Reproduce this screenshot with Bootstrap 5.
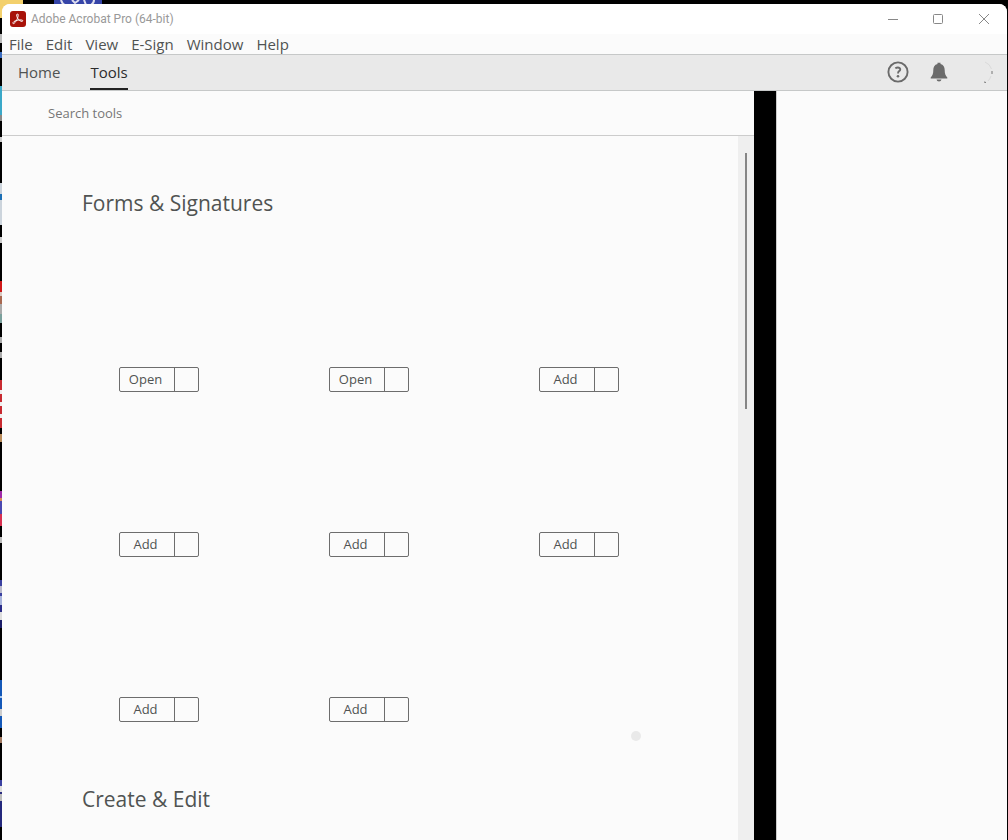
<!DOCTYPE html>
<html lang="en">
<head>
<meta charset="utf-8">
<meta name="viewport" content="width=device-width, initial-scale=1">
<title>Adobe Acrobat Pro (64-bit)</title>
<link href="https://cdn.jsdelivr.net/npm/bootstrap@5.3.0/dist/css/bootstrap.min.css" rel="stylesheet">
<style>
  body { font-family: "Open Sans", "Noto Sans", sans-serif; font-size: 15px; line-height: 20px; color: #505352; background: #000; }
  button { font: inherit; color: inherit; }
  a { color: inherit; text-decoration: none; }
  .desktop { padding: 4px 1px 0 2px; }
  .desk-left { width: 2px; height: 840px; background: linear-gradient(#f3d06c 18px, #000 18px 34px, #bbb 34px 43px, #000 43px 52px, #3a6cc0 52px 58px, #000 58px 86px, #3aa8c8 86px 115px, #888 115px 121px, #000 121px 137px, #ccc 137px 142px, #000 142px 183px, #ccd4dc 183px 194px, #1c6fb5 194px 200px, #ccd4dc 200px 225px, #000 225px 237px, #ccc 237px 243px, #000 243px 281px, #d01818 281px 292px, #d8c8c0 292px 296px, #a86850 296px 304px, #aaa 304px 314px, #7aa09c 314px 323px, #000 323px 337px, #aaa 337px 343px, #000 343px 352px, #aaa 352px 358px, #000 358px 380px, #c82a30 380px 390px, #eee 390px 394px, #c82a30 394px 402px, #eee 402px 406px, #c82a30 406px 414px, #eee 414px 418px, #c82a30 418px 428px, #000 428px 434px, #b98b5a 434px 442px, #000 442px 491px, #a02aa8 491px 498px, #d88858 498px 501px, #4a48b0 501px 514px, #d83050 514px 526px, #000 526px 537px, #bbb 537px 543px, #000 543px 580px, #3a40a0 580px 586px, #b8b8cc 586px 593px, #3a40a0 593px 596px, #a8b4dc 596px 605px, #2a2c88 605px 612px, #ddd 612px 620px, #1a1c68 620px 628px, #000 628px 680px, #1458b8 680px 696px, #a8c8f0 696px 698px, #1458b8 698px 709px, #ccc 709px 716px, #1458b8 716px 728px, #000 728px 737px, #a07860 737px 743px, #000 743px 780px, #3a40a0 780px 786px, #ddd 786px 792px, #2a2c80 792px 794px, #bbb 794px 801px, #24287c 801px 827px, #000 827px); }
  .desk-folder { width: 21px; height: 16px; background: #f3d06c; }
  .desk-gap { width: 31px; }
  .app { background: #fbfbfb; border-radius: 8px 8px 0 0; }
  .titlebar { height: 30px; background: #fff; padding-left: 8px; gap: 5px; font-family: Roboto, "Open Sans", sans-serif; font-size: 12px; color: #999; }
  .captions { gap: 28px; padding-right: 14px; }
  .captions button, .tool-icons button { border: 0; padding: 0; background: none; display: flex; }
  .menus { height: 20px; gap: 13px; padding-left: 7px; }
  .tabs { height: 37px; background: #e9e9e9; border: solid #c6c8c8; border-width: 1px 0; padding-left: 16px; gap: 30px; }
  .tabs a { height: 35px; line-height: 35px; }
  .tabs a.current { color: #2c2c2c; border-bottom: 2px solid #222; }
  .tool-icons { gap: 20px; padding-right: 14px; padding-bottom: 2px; }
  .search { height: 45px; border-bottom: 1px solid #ccc; padding-left: 46px; }
  .search input { border: 0; background: none; padding: 0; outline: 0; font-size: 13px; color: #505352; }
  .search input::placeholder { color: #777; opacity: 1; }
  .divider-bar { width: 22px; background: #000; }
  .side { width: 231px; border-left: 1px solid #ccc; }
  .track { width: 16px; background: #efefef; padding-top: 17px; }
  .thumb { width: 2px; height: 256px; background: #858585; }
  .heading { font-size: 21px; line-height: 30px; font-weight: 400; margin: 0; padding-left: 80px; }
  .tool-list { padding-top: 52px; }
  .tool-grid { display: grid; grid-template-columns: repeat(auto-fill, 210px); grid-auto-rows: 165px; padding-left: 52px; margin-top: 9px; margin-bottom: 62px; }
  .tool { display: flex; align-items: flex-end; justify-content: center; }
  .split { height: 25px; width: 80px; display: flex; border: 1px solid #6d6d6d; border-radius: 2px; font-size: 13px; }
  .split button { border: 0; background: none; padding: 0 3px 2px 0; line-height: 20px; }
  .split button:first-child { flex: 1; }
  .split button:last-child { width: 24px; border-left: 1px solid #6d6d6d; }
  .dot { width: 10px; height: 10px; border-radius: 50%; background: #e9e9e9; left: 629px; top: 640px; }
</style>
</head>
<body>
<div class="desktop vh-100 d-flex position-relative overflow-hidden">
  <div class="position-absolute top-0 start-0 d-flex" aria-hidden="true">
    <div class="desk-left"></div>
    <div class="desk-folder"></div>
    <div class="desk-gap"></div>
    <svg width="48" height="8"><path fill="#3544a8" d="M0 0h48v8H0z"/><path d="M7 0q1 4 5 6M18 0l3 3 4-3M30 0l2 5M40 0q0 3-3 5" fill="none" stroke="#dde" stroke-width="2"/></svg>
  </div>
  <div class="app flex-grow-1 d-flex flex-column overflow-hidden position-relative">
    <header class="titlebar d-flex align-items-center flex-shrink-0">
      <svg width="16" height="16" viewBox="0 0 16 16" aria-hidden="true"><rect width="16" height="16" rx="3" fill="#a81209"/><path d="M7.200 3c1.300-.4 1.300 1.600.5 3.700C6.800 9.300 4.500 13 3.200 12.600c-1.200-.7.700-2.500 3.600-3.200 2.800-.7 6-.7 6 .4-.1 1.100-2.700.5-4.300-1.300C6.900 6.700 6.100 3.500 7.200 3z" fill="none" stroke="#fff" stroke-width="1"/></svg>
      <span>Adobe Acrobat Pro (64-bit)</span>
      <div class="captions d-flex ms-auto">
        <button type="button" aria-label="Minimize"><svg width="18" height="18"><path d="M5 9.500h10" stroke="#888"/></svg></button>
        <button type="button" aria-label="Maximize"><svg width="18" height="18"><rect x="4.500" y="4.500" width="9" height="9" rx="1" fill="none" stroke="#888"/></svg></button>
        <button type="button" aria-label="Close"><svg width="18" height="18"><path d="M4 4l10 10M14 4L4 14" stroke="#888"/></svg></button>
      </div>
    </header>
    <nav class="menus d-flex align-items-center flex-shrink-0" aria-label="Menu">
      <a href="#">File</a><a href="#">Edit</a><a href="#">View</a><a href="#">E-Sign</a><a href="#">Window</a><a href="#">Help</a>
    </nav>
    <nav class="tabs d-flex flex-shrink-0" aria-label="Views">
      <a href="#">Home</a><a href="#" class="current" aria-current="page">Tools</a>
      <div class="tool-icons d-flex align-items-center ms-auto">
        <button type="button" aria-label="Help"><svg width="22" height="22" viewBox="0 0 22 22"><circle cx="11" cy="11" r="9.600" fill="none" stroke="#6b6b6b" stroke-width="1.900"/><path d="M8.300 7.300Q11 5.700 12.800 7.200c1.300 1.500-.3 2.600-1.100 3.300-.6.5-.6 1-.6 1.900" fill="none" stroke="#6b6b6b" stroke-width="1.900"/><circle cx="11" cy="15.300" r="1.300" fill="#6b6b6b"/></svg></button>
        <button type="button" aria-label="Notifications"><svg width="20" height="22" viewBox="0 0 20 22"><path d="M8.500 3V1.800h3V3c3 .8 4.200 3 4.200 6 0 4 .8 5.500 2.600 7.500v1H1.700v-1C3.500 14.500 4.300 13 4.300 9c0-3 1.200-5.200 4.200-6zM7.500 18.500h5Q12.200 20.500 10 20.500T7.500 18.500z" fill="#6b6b6b"/></svg></button>
        <button type="button" aria-label="Account"><svg width="24" height="24" viewBox="0 0 24 24"><path d="M15 22l2 .5M23 11v3" stroke="#777"/><path d="M16 2q5 2 6.500 7M22 16q-1 3-3 5" fill="none" stroke="#dadada"/></svg></button>
      </div>
    </nav>
    <div class="d-flex flex-grow-1 overflow-hidden">
      <main class="flex-grow-1 d-flex flex-column position-relative">
        <div class="search d-flex align-items-center flex-shrink-0"><input type="text" placeholder="Search tools" aria-label="Search tools"></div>
        <div class="d-flex flex-grow-1 overflow-hidden">
          <div class="tool-list flex-grow-1">
            <h2 class="heading">Forms &amp; Signatures</h2>
            <div class="tool-grid">
              <div class="tool"><div class="split"><button type="button">Open</button><button type="button" aria-label="More"></button></div></div>
              <div class="tool"><div class="split"><button type="button">Open</button><button type="button" aria-label="More"></button></div></div>
              <div class="tool"><div class="split"><button type="button">Add</button><button type="button" aria-label="More"></button></div></div>
              <div class="tool"><div class="split"><button type="button">Add</button><button type="button" aria-label="More"></button></div></div>
              <div class="tool"><div class="split"><button type="button">Add</button><button type="button" aria-label="More"></button></div></div>
              <div class="tool"><div class="split"><button type="button">Add</button><button type="button" aria-label="More"></button></div></div>
              <div class="tool"><div class="split"><button type="button">Add</button><button type="button" aria-label="More"></button></div></div>
              <div class="tool"><div class="split"><button type="button">Add</button><button type="button" aria-label="More"></button></div></div>
            </div>
            <h2 class="heading">Create &amp; Edit</h2>
          </div>
          <div class="track d-flex justify-content-center flex-shrink-0"><div class="thumb"></div></div>
        </div>
        <div class="dot position-absolute" aria-hidden="true"></div>
      </main>
      <div class="divider-bar flex-shrink-0"></div>
      <aside class="side flex-shrink-0"></aside>
    </div>
  </div>
</div>
<script src="https://cdn.jsdelivr.net/npm/bootstrap@5.3.0/dist/js/bootstrap.bundle.min.js"></script>
</body>
</html>
